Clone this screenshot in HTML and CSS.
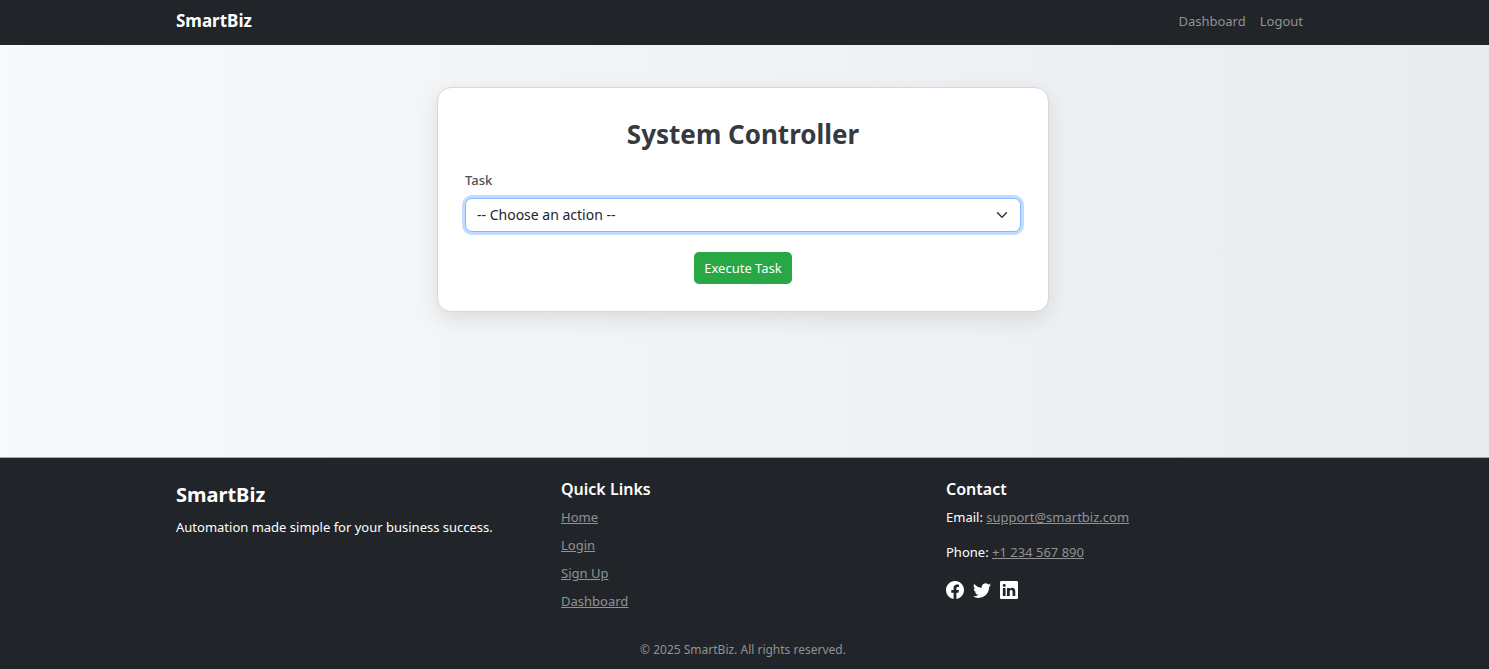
FILE: index.html
```html
<!DOCTYPE html>
<html lang="en">
<head>
<meta charset="utf-8">
<meta name="viewport" content="width=device-width, initial-scale=1">
<title>SmartBiz – System Controller</title>
<link rel="stylesheet" href="styles.css">
</head>
<body>
<header class="navbar">
  <div class="container navbar-inner">
    <a class="brand" href="#">SmartBiz</a>
    <nav class="nav">
      <a class="nav-link" href="#">Dashboard</a>
      <a class="nav-link" href="#">Logout</a>
    </nav>
  </div>
</header>
<main class="main">
  <section class="card">
    <h1 class="card-title">System Controller</h1>
    <form class="form">
      <label class="label" for="task">Task</label>
      <div class="select-wrap">
        <select class="select" id="task">
          <option>-- Choose an action --</option>
        </select>
        <svg class="chevron" viewBox="0 0 16 16" aria-hidden="true"><path d="m2 5 6 6 6-6" fill="none" stroke="#343a40" stroke-width="2" stroke-linecap="round" stroke-linejoin="round"/></svg>
      </div>
      <button class="button" type="button">Execute Task</button>
    </form>
  </section>
</main>
<footer class="footer">
  <div class="container footer-grid">
    <section>
      <h2 class="footer-brand">SmartBiz</h2>
      <p class="footer-text">Automation made simple for your business success.</p>
    </section>
    <section>
      <h3 class="footer-title">Quick Links</h3>
      <ul class="links">
        <li><a class="footer-link" href="#">Home</a></li>
        <li><a class="footer-link" href="#">Login</a></li>
        <li><a class="footer-link" href="#">Sign Up</a></li>
        <li><a class="footer-link" href="#">Dashboard</a></li>
      </ul>
    </section>
    <section>
      <h3 class="footer-title">Contact</h3>
      <p class="contact">Email: <a class="footer-link" href="#">support@smartbiz.com</a></p>
      <p class="contact">Phone: <a class="footer-link" href="#">+1 234 567 890</a></p>
      <div class="social">
        <a class="social-link" href="#" aria-label="Facebook"><svg class="icon" viewBox="0 0 16 16"><path fill="currentColor" d="M16 8.049c0-4.446-3.582-8.05-8-8.05C3.58 0-.002 3.603-.002 8.05c0 4.017 2.926 7.347 6.75 7.951v-5.625h-2.03V8.05H6.75V6.275c0-2.017 1.195-3.131 3.022-3.131.876 0 1.791.157 1.791.157v1.98h-1.009c-.993 0-1.303.621-1.303 1.258v1.51h2.218l-.354 2.326H9.25V16c3.824-.604 6.75-3.934 6.75-7.951"/></svg></a>
        <a class="social-link" href="#" aria-label="Twitter"><svg class="icon" viewBox="0 0 16 16"><path fill="currentColor" d="M5.026 15c6.038 0 9.341-5.003 9.341-9.334q.002-.211-.006-.422A6.7 6.7 0 0 0 16 3.542a6.7 6.7 0 0 1-1.889.518 3.3 3.3 0 0 0 1.447-1.817 6.5 6.5 0 0 1-2.087.793A3.286 3.286 0 0 0 7.875 6.03a9.32 9.32 0 0 1-6.767-3.429 3.29 3.29 0 0 0 1.018 4.382A3.3 3.3 0 0 1 .64 6.575v.045a3.29 3.29 0 0 0 2.632 3.218 3.2 3.2 0 0 1-.865.115 3 3 0 0 1-.614-.057 3.28 3.28 0 0 0 3.067 2.277A6.6 6.6 0 0 1 .78 13.58a6 6 0 0 1-.78-.045A9.34 9.34 0 0 0 5.026 15"/></svg></a>
        <a class="social-link" href="#" aria-label="LinkedIn"><svg class="icon" viewBox="0 0 16 16"><path fill="currentColor" d="M0 1.146C0 .513.526 0 1.175 0h13.65C15.474 0 16 .513 16 1.146v13.708c0 .633-.526 1.146-1.175 1.146H1.175C.526 16 0 15.487 0 14.854zm4.943 12.248V6.169H2.542v7.225zm-1.2-8.212c.837 0 1.358-.554 1.358-1.248-.015-.709-.52-1.248-1.342-1.248S2.4 3.226 2.4 3.934c0 .694.521 1.248 1.327 1.248zm4.908 8.212V9.359c0-.216.016-.432.08-.586.173-.431.568-.878 1.232-.878.869 0 1.216.662 1.216 1.634v3.865h2.401V9.25c0-2.22-1.184-3.252-2.764-3.252-1.274 0-1.845.7-2.165 1.193v.025h-.016l.016-.025V6.169h-2.4c.03.678 0 7.225 0 7.225z"/></svg></a>
      </div>
    </section>
  </div>
  <p class="copyright">© 2025 SmartBiz. All rights reserved.</p>
</footer>
</body>
</html>
```

FILE: styles.css
```css
* { box-sizing: border-box; }

body {
  margin: 0;
  min-height: 100vh;
  display: flex;
  flex-direction: column;
  font-family: "Segoe UI", "Noto Sans", sans-serif;
  font-size: 13px;
  line-height: 21px;
  color: #212529;
  background: linear-gradient(to right, #f8f9fa, #e9ecef);
}

h1, h2, h3, p, ul { margin: 0; }

.container {
  width: 100%;
  max-width: 1157px;
  margin: 0 auto;
  padding: 0 10px;
}

.navbar { background: #212529; padding: 7px 0 10px; }
.navbar-inner { display: flex; align-items: center; justify-content: space-between; }
.brand { color: #fff; font-size: 17px; font-weight: 700; line-height: 28px; text-decoration: none; }
.nav { display: flex; gap: 14px; padding-right: 10px; }
.nav-link { color: #909294; text-decoration: none; }

.main { flex: 1; padding: 42px 3px 0 0; }
.card {
  max-width: 612px;
  margin: 0 auto;
  padding: 28px 27px 27px;
  background: #fff;
  border: 1px solid #d5d7d9;
  border-radius: 14px;
  box-shadow: 0 7px 21px rgba(0, 0, 0, .1);
}
.card-title { color: #343a40; font-size: 26px; line-height: 36px; font-weight: 700; text-align: center; margin-bottom: 18px; }
.form { display: flex; flex-direction: column; }
.label { color: #495057; font-weight: 500; margin-bottom: 7px; }
.select-wrap { display: grid; align-items: center; }
.select {
  grid-area: 1 / 1;
  width: 100%;
  height: 34px;
  padding: 0 32px 1px 11px;
  appearance: none;
  font: inherit;
  font-size: 14px;
  color: #212529;
  background: #fff;
  border: 1px solid #86b7fe;
  border-radius: 7px;
  outline: none;
  box-shadow: 0 0 0 3px #c2dbfe;
}
.chevron { grid-area: 1 / 1; justify-self: end; width: 12px; height: 12px; margin-right: 13px; pointer-events: none; }
.button {
  align-self: center;
  margin-top: 20px;
  height: 32px;
  padding: 0 10px;
  font: inherit;
  color: #fff;
  background: #28a745;
  border: 0;
  border-radius: 5px;
}

.footer { background: #212529; color: #fff; border-top: 1px solid #a5a8ab; padding: 21px 0 9px; }
.footer-grid { display: grid; grid-template-columns: repeat(3, 1fr); gap: 18px; }
.footer-brand { font-size: 20px; line-height: 32px; font-weight: 700; margin-bottom: 6px; }
.footer-title { font-size: 16px; line-height: 21px; font-weight: 600; margin-bottom: 7px; }
.links { list-style: none; padding: 0; display: grid; gap: 7px; }
.footer-link { color: #909294; }
.contact { margin-bottom: 14px; }
.social { display: flex; gap: 9px; padding-top: 4px; }
.social-link { color: #fff; }
.icon { display: block; width: 18px; height: 18px; }
.copyright { color: #909294; font-size: 12px; line-height: 21px; text-align: center; margin-top: 27px; padding-right: 3px; }
```
